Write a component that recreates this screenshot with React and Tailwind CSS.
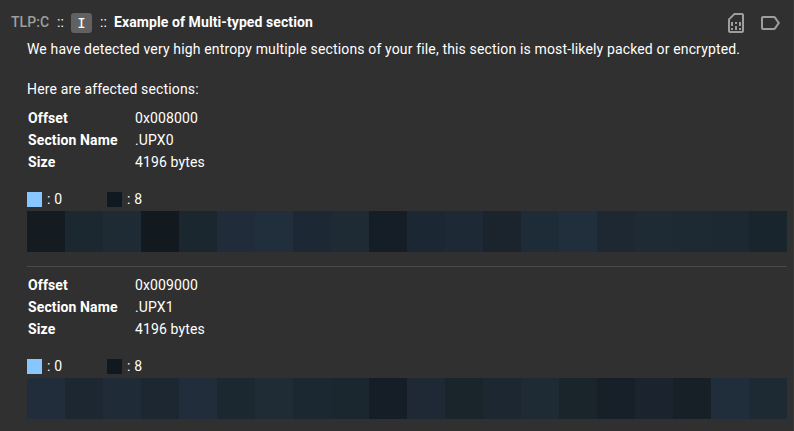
import React from "react";
import { MdOutlineSimCard, MdLabelOutline } from "react-icons/md";

const sections = [
  {
    offset: "0x008000",
    name: ".UPX0",
    size: "4196 bytes",
    cells: ["#141b21", "#1c2830", "#1e2b35", "#12191f", "#1b272f", "#202c3a", "#212e3b", "#1c2833", "#1e2b34", "#151d26", "#1b2732", "#1d2934", "#1b242d", "#1e2c37", "#212e3c", "#1d2833", "#1e2b35", "#1d2933", "#1c2832", "#19252d"],
  },
  {
    offset: "0x009000",
    name: ".UPX1",
    size: "4196 bytes",
    cells: ["#212d3a", "#1c2731", "#1f2c38", "#1c2731", "#212d3a", "#1c282f", "#1f2c36", "#1b2731", "#1b272e", "#151d26", "#1e2935", "#1a242b", "#1c2731", "#1e2b35", "#1a242b", "#172028", "#1b242e", "#172027", "#202e3b", "#1d2a34"],
  },
];

function Row({ label, value }) {
  return (
    <div className="flex h-[22px] items-center tracking-[0.12px]">
      <div className="w-[107px] font-bold">{label}</div>
      <div>{value}</div>
    </div>
  );
}

function Legend({ swatch, value }) {
  return (
    <div className="flex w-20 items-center">
      <span className={`size-[15px] ${swatch}`} />
      <span className="ml-[5px]">: {value}</span>
    </div>
  );
}

function Section({ section }) {
  return (
    <section>
      <div className="pl-px">
        <Row label="Offset" value={section.offset} />
        <Row label="Section Name" value={section.name} />
        <Row label="Size" value={section.size} />
      </div>
      <div className="mt-[18px] flex h-4 items-center tracking-[0.15px]">
        <Legend swatch="bg-[#87c6fe]" value="0" />
        <Legend swatch="bg-[#111920]" value="8" />
      </div>
      <div className="mt-1 grid h-[41px] w-[760px] grid-cols-20">
        {section.cells.map((color, i) => (
          <div key={i} style={{ backgroundColor: color }} />
        ))}
      </div>
    </section>
  );
}

export default function App() {
  return (
    <main className="h-[431px] w-[794px] overflow-hidden border-r border-[#393939] bg-[#303030] font-['Roboto',sans-serif] text-sm leading-5 text-white">
      <header className="flex h-[39px] items-center pt-[6px] pl-[11px] tracking-[0.09px]">
        <span className="w-[46px] pb-0.5 font-medium text-[#9e9e9e]">TLP:C</span>
        <span className="w-[14px] pb-0.5">::</span>
        <span className="flex h-5 w-[21px] items-center justify-center rounded-[3px] bg-[#616161] font-['DejaVu_Sans_Mono',monospace] text-[14px]">I</span>
        <span className="ml-2 w-[14px] pb-0.5">::</span>
        <span className="pb-0.5 font-bold">Example of Multi-typed section</span>
        <span className="mr-[11px] ml-auto flex gap-[10px] text-[#9e9e9e]">
          <MdOutlineSimCard size={24} />
          <MdLabelOutline size={24} />
        </span>
      </header>
      <div className="pl-[27px]">
        <p className="tracking-[0.15px]">We have detected very high entropy multiple sections of your file, this section is most-likely packed or encrypted.</p>
        <p className="mt-5 mb-[8px] tracking-[0.15px]">Here are affected sections:</p>
        <Section section={sections[0]} />
        <hr className="mt-[14px] mb-[7px] w-[760px] border-[#494949]" />
        <Section section={sections[1]} />
      </div>
    </main>
  );
}
